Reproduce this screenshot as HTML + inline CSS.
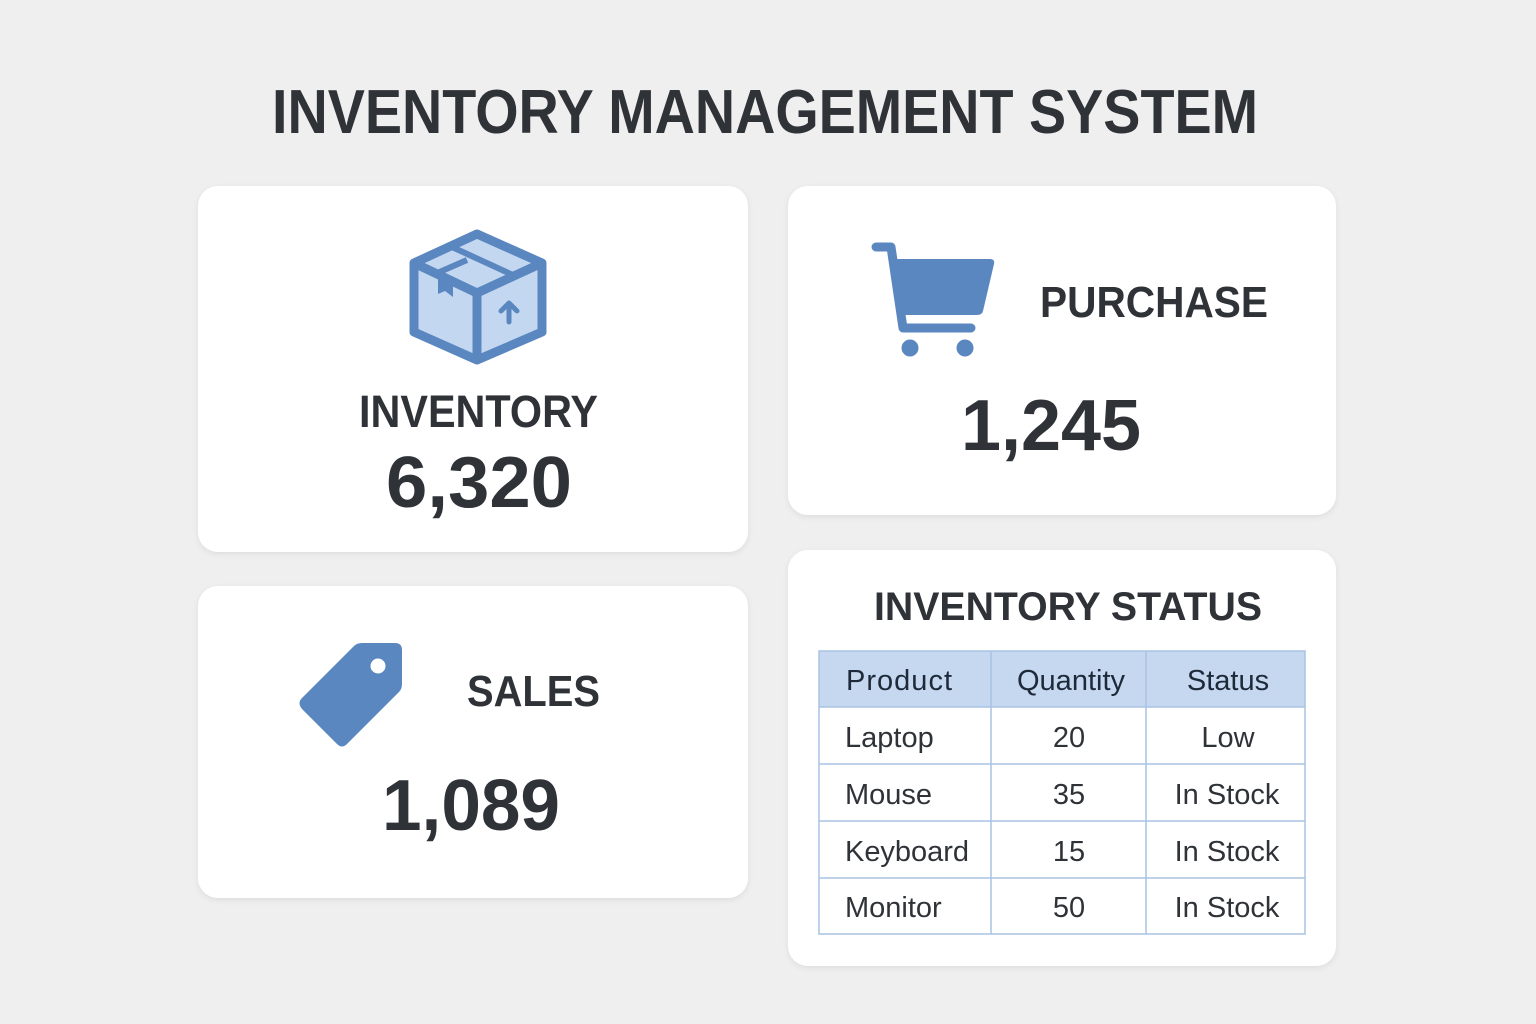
<!DOCTYPE html>
<html><head><style>
html,body{margin:0;padding:0;background:#efefef;}
svg{display:block}
text{font-family:"Liberation Sans",sans-serif;fill:#2f3338}
</style></head><body>
<svg width="1536" height="1024" viewBox="0 0 1536 1024" xmlns="http://www.w3.org/2000/svg">
<defs>
<filter id="sh" x="-10%" y="-10%" width="120%" height="130%"><feDropShadow dx="0" dy="2" stdDeviation="3" flood-color="#000" flood-opacity="0.08"/></filter>
</defs>
<rect width="1536" height="1024" fill="#efefef"/>
<text x="272" y="133" font-size="62" font-weight="bold" textLength="986" lengthAdjust="spacingAndGlyphs">INVENTORY MANAGEMENT SYSTEM</text>

<g filter="url(#sh)" fill="#fff">
<rect x="198" y="186" width="550" height="366" rx="20"/>
<rect x="788" y="186" width="548" height="329" rx="20"/>
<rect x="198" y="586" width="550" height="312" rx="20"/>
<rect x="788" y="550" width="548" height="416" rx="20"/>
</g>

<!-- box icon -->
<g stroke="#5b87c0" stroke-width="9" stroke-linejoin="round" fill="#c3d7f0">
<path d="M477 234 L414 263 L414 332 L477 360 L542 332 L542 263 Z"/>
<path d="M414 263 L477 293 L542 263 M477 293 L477 360" fill="none"/>
<path d="M452 247 L515 276 M435 274 L467 260" fill="none" stroke-width="6"/>
</g>
<path d="M438 272 L453 279 L453 297 L445 291 L438 294 Z" fill="#5b87c0"/>
<path d="M509 322 L509 304 M501 311 L509 303 L517 311" stroke="#5b87c0" stroke-width="5" fill="none" stroke-linecap="round" stroke-linejoin="round"/>
<text x="359" y="427" font-size="45" font-weight="bold" textLength="239" lengthAdjust="spacingAndGlyphs">INVENTORY</text>
<text x="386" y="507" font-size="72" font-weight="bold" textLength="186" lengthAdjust="spacingAndGlyphs">6,320</text>

<!-- cart -->
<path d="M876 247 L891 247 L903 328 L971 328" stroke="#5b87c0" stroke-width="9" fill="none" stroke-linecap="round" stroke-linejoin="round"/>
<path d="M890 259 L990 259 Q995 259 994 264 L983 311 Q982 315 977 315 L900 315 Z" fill="#5b87c0"/>
<circle cx="910" cy="348" r="8.5" fill="#5b87c0"/>
<circle cx="965" cy="348" r="8.5" fill="#5b87c0"/>
<text x="1040" y="317" font-size="44" font-weight="bold" textLength="228" lengthAdjust="spacingAndGlyphs">PURCHASE</text>
<text x="961" y="450" font-size="72" font-weight="bold" textLength="180" lengthAdjust="spacingAndGlyphs">1,245</text>

<!-- tag -->
<path d="M302 698 L354 646 Q357 643 362 643 L395 643 Q402 643 402 650 L402 684 Q402 689 399 692 L347 744 Q342 749 337 744 L302 709 Q297 703 302 698 Z" fill="#5b87c0"/>
<circle cx="378" cy="666" r="7.5" fill="#fff"/>
<text x="467" y="706" font-size="44" font-weight="bold" textLength="133" lengthAdjust="spacingAndGlyphs">SALES</text>
<text x="382" y="830" font-size="72" font-weight="bold" textLength="178" lengthAdjust="spacingAndGlyphs">1,089</text>

<!-- table -->
<text x="874" y="620" font-size="40" font-weight="bold" textLength="388" lengthAdjust="spacingAndGlyphs">INVENTORY STATUS</text>
<rect x="819" y="651" width="486" height="56" fill="#c5d8ef"/>
<g stroke="#a9c3e6" stroke-width="1.5" fill="none">
<rect x="819" y="651" width="486" height="283"/>
<line x1="819" y1="707" x2="1305" y2="707"/>
<line x1="819" y1="764" x2="1305" y2="764"/>
<line x1="819" y1="821" x2="1305" y2="821"/>
<line x1="819" y1="878" x2="1305" y2="878"/>
<line x1="991" y1="651" x2="991" y2="934"/>
<line x1="1146" y1="651" x2="1146" y2="934"/>
</g>
<g font-size="29">
<text x="846" y="690" style="fill:#1e2a3a" textLength="106">Product</text>
<text x="1071" y="690" text-anchor="middle" style="fill:#1e2a3a">Quantity</text>
<text x="1228" y="690" text-anchor="middle" style="fill:#1e2a3a">Status</text>
<text x="845" y="747">Laptop</text><text x="1069" y="747" text-anchor="middle">20</text><text x="1228" y="747" text-anchor="middle">Low</text>
<text x="845" y="804">Mouse</text><text x="1069" y="804" text-anchor="middle">35</text><text x="1227" y="804" text-anchor="middle">In Stock</text>
<text x="845" y="861" textLength="124">Keyboard</text><text x="1069" y="861" text-anchor="middle">15</text><text x="1227" y="861" text-anchor="middle">In Stock</text>
<text x="845" y="917">Monitor</text><text x="1069" y="917" text-anchor="middle">50</text><text x="1227" y="917" text-anchor="middle">In Stock</text>
</g>
</svg>
</body></html>
